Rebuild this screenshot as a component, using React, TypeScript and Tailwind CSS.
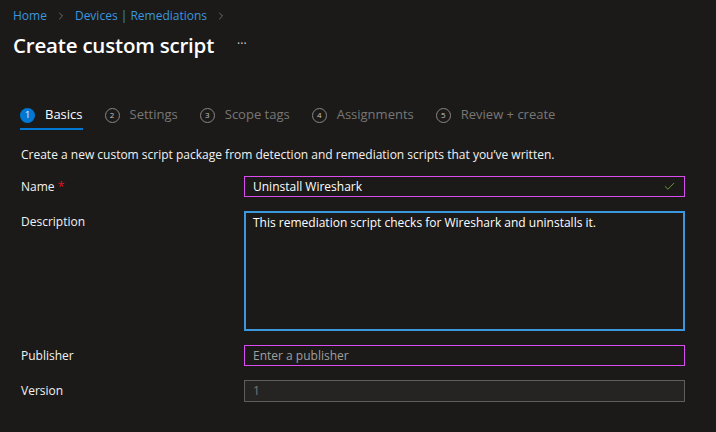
import { ChevronRight, Check } from "lucide-react";

const steps = ["Basics", "Settings", "Scope tags", "Assignments", "Review + create"];

function StepTab({ n, label, active }: { n: number; label: string; active: boolean }) {
  return (
    <div className="relative flex items-center gap-[10px] h-[30px]">
      {active ? (
        <span className="flex items-center justify-center w-[15px] h-[15px] rounded-full bg-[#0078d4] text-[9px] text-white">
          {n}
        </span>
      ) : (
        <span className="flex items-center justify-center w-[15px] h-[15px] rounded-full border border-[#8a8886] text-[8px] text-[#c8c6c4]">
          {n}
        </span>
      )}
      <span className={active ? "text-[13px] text-white" : "text-[13px] text-[#797775]"}>{label}</span>
      {active && <span className="absolute left-0 right-0 bottom-0 h-[2px] bg-[#0078d4]" />}
    </div>
  );
}

export default function App() {
  return (
    <div
      className="w-[716px] h-[432px] bg-[#1b1a19] text-[#f3f2f1] overflow-hidden"
      style={{ fontFamily: '"Open Sans", "Noto Sans", sans-serif' }}
    >
      {/* Header */}
      <div className="px-[13px] pt-[6px]">
        <div className="flex items-center gap-[8px] text-[12px] text-[#3a96dd] h-[20px]">
          <span>Home</span>
          <ChevronRight className="w-[12px] h-[12px] text-[#8a8886]" strokeWidth={1.5} />
          <span>Devices | Remediations</span>
          <ChevronRight className="w-[12px] h-[12px] text-[#8a8886]" strokeWidth={1.5} />
        </div>
        <div className="flex items-center mt-[7px] h-[24px]">
          <h1 className="text-[20.5px] font-semibold text-white tracking-[-0.2px]">Create custom script</h1>
          <span className="ml-[23px] text-[12px] text-[#d2d0ce] -mt-[2px]">···</span>
        </div>
      </div>

      {/* Steps */}
      <div className="flex items-center gap-[22px] pl-[20px] mt-[43px]">
        {steps.map((s, i) => (
          <StepTab key={s} n={i + 1} label={s} active={i === 0} />
        ))}
      </div>

      {/* Form */}
      <div className="pl-[21px] pr-[31px]">
        <p className="text-[12px] text-[#f3f2f1] mt-[16px] leading-[18px]">
          Create a new custom script package from detection and remediation scripts that you’ve written.
        </p>

        <div className="flex flex-col gap-[14px] mt-[12px] text-[12px]">
          <div className="flex items-center">
            <label className="w-[223px]">
              Name <span className="text-[#e81123]">*</span>
            </label>
            <div className="flex items-center flex-1 h-[21px] border border-[#d84cf0] px-[8px]">
              <span className="flex-1 text-white">Uninstall Wireshark</span>
              <Check className="w-[13px] h-[13px] text-[#7fb23a]" strokeWidth={1.5} />
            </div>
          </div>

          <div className="flex items-start">
            <label className="w-[223px] pt-[2px]">Description</label>
            <div className="flex-1 h-[120px] border-2 border-[#3a96dd] px-[7px] pt-[1px] text-white">
              This remediation script checks for Wireshark and uninstalls it.
            </div>
          </div>

          <div className="flex items-center">
            <label className="w-[223px]">Publisher</label>
            <div className="flex items-center flex-1 h-[21px] border border-[#d84cf0] px-[8px] text-[#a19f9d]">
              Enter a publisher
            </div>
          </div>

          <div className="flex items-center">
            <label className="w-[223px]">Version</label>
            <div className="flex items-center flex-1 h-[22px] border border-[#605e5c] bg-[#252423] px-[8px] text-[#797775]">
              1
            </div>
          </div>
        </div>
      </div>
    </div>
  );
}
